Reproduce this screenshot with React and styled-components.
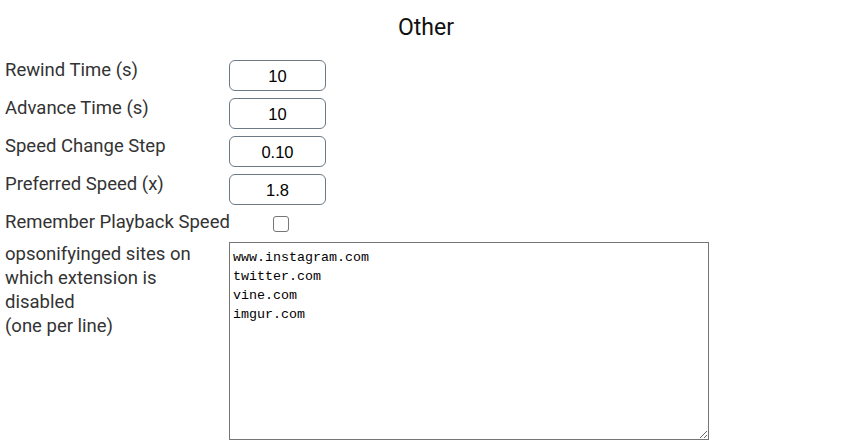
import React from 'react'
import styled, { createGlobalStyle } from 'styled-components'

const GlobalStyle = createGlobalStyle`
    html, body {
        margin: 0;
        padding: 0;
        background: #ffffff;
    }
    body {
        font-family: Roboto, "Noto Sans", sans-serif;
    }
`

const Page = styled.div`
    width: 852px;
    padding-top: 14px;
`

const Heading = styled.h2`
    color: #111;
    font-size: 23px;
    font-weight: 400;
    margin: 0 0 19px 0;
    text-align: center;
`

const Options = styled.div`
    display: grid;
    grid-template-columns: 224px 480px;
    grid-template-rows: repeat(5, 38px) auto;
    padding-left: 5px;
`

const Label = styled.label`
    color: #333;
    font-size: 18.5px;
    line-height: 24px;
    margin-top: -2px;
    white-space: nowrap;
`

const Cell = styled.div`
    display: flex;
    align-items: flex-start;
`

const NumberInput = styled.input`
    box-sizing: border-box;
    width: 97px;
    height: 31px;
    border: 1px solid #6c7a86;
    border-radius: 6px;
    font-family: "Liberation Sans", Arial, sans-serif;
    font-size: 16.5px;
    color: #000;
    text-align: center;
    padding: 2px 0 0 0;
    outline: none;
`

const CheckBox = styled.input`
    appearance: none;
    box-sizing: border-box;
    width: 16px;
    height: 16px;
    margin: 4px 0 0 44px;
    border: 1px solid #767676;
    border-radius: 3px;
    background: #fff;
`

const SitesLabel = styled(Label)`
    margin-top: -8px;
    white-space: normal;
`

const SitesArea = styled.textarea`
    box-sizing: border-box;
    width: 480px;
    height: 198px;
    margin-top: -8px;
    border: 1px solid #767676;
    border-radius: 0;
    padding: 5px 3px;
    font-family: "Liberation Mono", "DejaVu Sans Mono", monospace;
    font-size: 13.33px;
    line-height: 19px;
    color: #000;
    resize: both;
    outline: none;
`

const numberFields = [
    { label: 'Rewind Time (s)', value: '10' },
    { label: 'Advance Time (s)', value: '10' },
    { label: 'Speed Change Step', value: '0.10' },
    { label: 'Preferred Speed (x)', value: '1.8' },
]

const sites = 'www.instagram.com\ntwitter.com\nvine.com\nimgur.com'

export default function App() {
    return (
        <Page>
            <GlobalStyle />
            <Heading>Other</Heading>
            <Options>
                {numberFields.map(field => (
                    <React.Fragment key={field.label}>
                        <Label>{field.label}</Label>
                        <Cell>
                            <NumberInput type="text" defaultValue={field.value} />
                        </Cell>
                    </React.Fragment>
                ))}
                <Label>Remember Playback Speed</Label>
                <Cell>
                    <CheckBox type="checkbox" />
                </Cell>
                <SitesLabel>
                    opsonifyinged sites on<br />
                    which extension is<br />
                    disabled<br />
                    (one per line)
                </SitesLabel>
                <Cell>
                    <SitesArea defaultValue={sites} spellCheck={false} />
                </Cell>
            </Options>
        </Page>
    )
}
